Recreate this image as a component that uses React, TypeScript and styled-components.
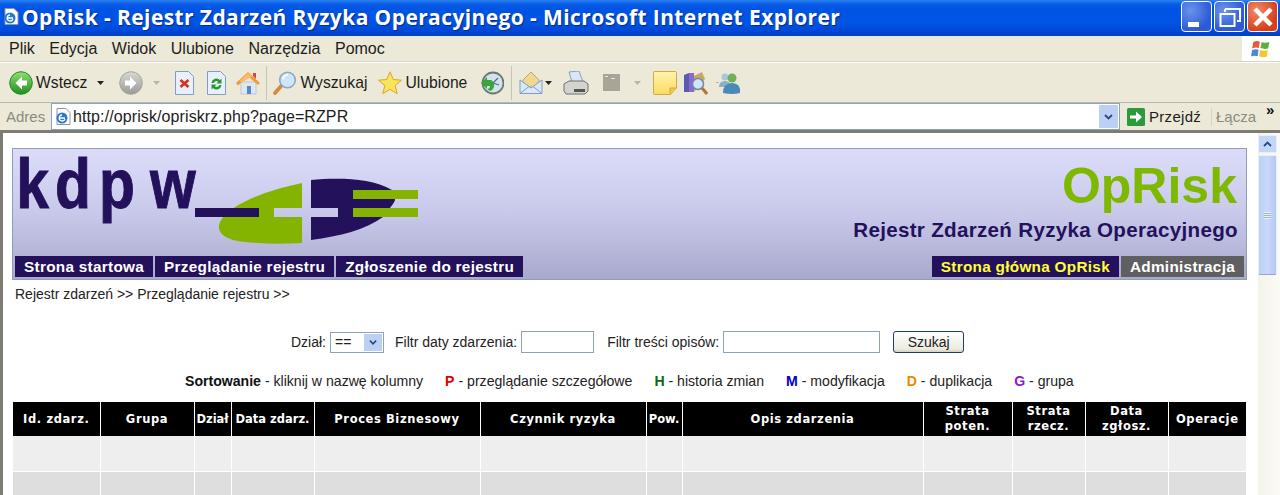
import styled, {createGlobalStyle} from "styled-components";

const GlobalStyle = createGlobalStyle`
    html, body {
        margin: 0;
        padding: 0;
        background: #fff;
    }
    * {
        box-sizing: border-box;
    }
`;

const sans = `"Liberation Sans", Arial, sans-serif`;

const columns = [
    {width: 87, label: ["Id. zdarz."]},
    {width: 94, label: ["Grupa"]},
    {width: 37, label: ["Dział"], tight: true},
    {width: 83, label: ["Data zdarz."], tight: true},
    {width: 166, label: ["Proces Biznesowy"]},
    {width: 166, label: ["Czynnik ryzyka"]},
    {width: 36, label: ["Pow."], tight: true},
    {width: 241, label: ["Opis zdarzenia"]},
    {width: 89, label: ["Strata", "poten."]},
    {width: 73, label: ["Strata", "rzecz."]},
    {width: 83, label: ["Data", "zgłosz."]},
    {width: 78, label: ["Operacje"]},
];

const legend = [
    {key: "P", color: "#e00000", text: "przeglądanie szczegółowe"},
    {key: "H", color: "#0a6a0a", text: "historia zmian"},
    {key: "M", color: "#0000c8", text: "modyfikacja"},
    {key: "D", color: "#ee8800", text: "duplikacja"},
    {key: "G", color: "#8a1cc8", text: "grupa"},
];

const Caret = () => (
    <svg width="7" height="4" viewBox="0 0 7 4"><path d="M0 0h7L3.500 4z" fill="#222"/></svg>
);

const BackIcon = ({off}: {off?: boolean}) => (
    <svg width="24" height="24" viewBox="0 0 24 24" style={off ? {transform: "scaleX(-1)"} : undefined}>
        <defs>
            <linearGradient id={off ? "navOff" : "navOn"} x1="0" y1="0" x2="0" y2="1">
                <stop offset="0" stopColor={off ? "#d8d8d4" : "#8fe070"}/>
                <stop offset="1" stopColor={off ? "#9a9a96" : "#1f8f1f"}/>
            </linearGradient>
        </defs>
        <circle cx="12" cy="12" r="11.300" fill={`url(#${off ? "navOff" : "navOn"})`} stroke={off ? "#a5a5a0" : "#2b8a2b"}/>
        <path d="M13 5.500 6.500 12l6.500 6.500v-4h5v-5h-5z" fill="#fff"/>
    </svg>
);

const StopIcon = () => (
    <svg width="19" height="24" viewBox="0 0 19 24">
        <path d="M.5.5h13l5 5v18H.5z" fill="#e8f0fb" stroke="#7f9dc8"/>
        <path d="M5.500 9l8 7M13.500 9l-8 7" stroke="#d8321a" strokeWidth="2.800"/>
    </svg>
);

const RefreshIcon = () => (
    <svg width="19" height="24" viewBox="0 0 19 24">
        <path d="M.5.5h13l5 5v18H.5z" fill="#e8f0fb" stroke="#7f9dc8"/>
        <path d="M4.500 12a5 5 0 0 1 8.500-3l1.500-1.500v5h-5l1.700-1.700a2.800 2.800 0 0 0-4.500 1.200z" fill="#2a9a30"/>
        <path d="M14.500 14a5 5 0 0 1-8.500 3l-1.500 1.500v-5h5l-1.700 1.700a2.800 2.800 0 0 0 4.500-1.200z" fill="#2a9a30"/>
    </svg>
);

const HomeIcon = () => (
    <svg width="24" height="24" viewBox="0 0 24 24">
        <path d="M5 11h15v12H5z" fill="#dfe7f2" stroke="#a8b4c4" strokeWidth=".6"/>
        <path d="M11 15h4v8h-4z" fill="#5c86c0"/>
        <path d="M0 12 12 1l12 11-2 2-10-8.500L2 14.500z" fill="#f09a3c"/>
        <path d="M4 9.500 12 2l4 3.500L5 12z" fill="#f6bd6a"/>
        <path d="M17 2h3v6l-3-3z" fill="#c8503a"/>
    </svg>
);

const SearchIcon = () => (
    <svg width="24" height="24" viewBox="0 0 24 24">
        <path d="M2 22l7-8" stroke="#d68a3c" strokeWidth="3.800" strokeLinecap="round"/>
        <circle cx="14.500" cy="9" r="7.800" fill="#cfe6fa" stroke="#8ca6c4" strokeWidth="1.600"/>
        <path d="M10 8a5 5 0 0 1 5-4" stroke="#fff" strokeWidth="1.600" fill="none"/>
    </svg>
);

const StarIcon = () => (
    <svg width="24" height="24" viewBox="0 0 24 24">
        <path d="M12 .8l3.300 7.700 8.200.7-6.300 5.400 2 8.100L12 18.400l-7.200 4.300 2-8.100L.5 9.200l8.200-.7z" fill="#fbe35c" stroke="#d8a92c"/>
    </svg>
);

const HistoryIcon = () => (
    <svg width="24" height="24" viewBox="0 0 24 24">
        <circle cx="13" cy="12" r="10.500" fill="#d5e2ee" stroke="#6a7a70" strokeWidth="1.800"/>
        <path d="M13 12l5-5M13 12l6 2" stroke="#4a6a9a" strokeWidth="1.200"/>
        <path d="M1 12l6-6v3h4a6 6 0 0 1-1 11l-3-2c2 0 3-1 3-3H7v3z" fill="#3aa63a"/>
    </svg>
);

const MailIcon = () => (
    <svg width="24" height="24" viewBox="0 0 24 24">
        <path d="M4 9 12 1l8 8v7H4z" fill="#f0d890" stroke="#b8a878"/>
        <path d="M1 9l11 8 11-8v13.500H1z" fill="#d8e8fa" stroke="#7f9dc8"/>
        <path d="M1 22.500l9-7M23 22.500l-9-7" stroke="#7f9dc8" fill="none"/>
    </svg>
);

const PrintIcon = () => (
    <svg width="26" height="24" viewBox="0 0 26 24">
        <path d="M6 1l10-1 4 11H9z" fill="#d8e6f6" stroke="#8aa0bc"/>
        <path d="M1 13l5-3h15l4 3v7l-3 3H3l-2-3z" fill="#d4d4cf" stroke="#70706c"/>
        <path d="M11 18h11v3H11z" fill="#55554f"/>
    </svg>
);

const EditIcon = () => (
    <svg width="17" height="17" viewBox="0 0 17 17">
        <path d="M0 0h17v17H0z" fill="#a8a498"/>
        <path d="M2 2h3v1H2zM8 4h4v1H8z" fill="#e8e6de"/>
    </svg>
);

const NoteIcon = () => (
    <svg width="24" height="24" viewBox="0 0 24 24">
        <defs>
            <linearGradient id="noteFill" x1="0" y1="0" x2="0" y2="1">
                <stop offset="0" stopColor="#fff3ad"/>
                <stop offset="1" stopColor="#fadb62"/>
            </linearGradient>
        </defs>
        <path d="M.5 1.500q0-1 1-1h21q1 0 1 1V17l-6 6.500H1.500q-1 0-1-1z" fill="url(#noteFill)" stroke="#d8a838"/>
        <path d="M23 17h-6v6" fill="#f3c84a" stroke="#d8a838"/>
    </svg>
);

const ResearchIcon = () => (
    <svg width="24" height="24" viewBox="0 0 24 24">
        <path d="M0 4l5-2v19H0z" fill="#5a5ab0"/>
        <path d="M5 2h5v19H5z" fill="#8a6ac8"/>
        <path d="M10 5l8-4 3 7-11 13z" fill="#c8a860"/>
        <circle cx="14" cy="13" r="5.500" fill="#cfe6fa" stroke="#6a8ab0" strokeWidth="1.500"/>
        <path d="M18 17l5 6" stroke="#b8742c" strokeWidth="3"/>
    </svg>
);

const MessengerIcon = () => (
    <svg width="25" height="24" viewBox="0 0 25 24">
        <circle cx="9" cy="6" r="3.500" fill="#a8c8d8"/>
        <path d="M3 16q0-6 6-6t5 6z" fill="#8ab0c4"/>
        <circle cx="16" cy="7" r="4.500" fill="#6fb05a"/>
        <path d="M7 22q0-10 9-10t8 10q-8 2-17 0z" fill="#4a8ab8"/>
        <path d="M0 11h3v1H0z" fill="#a8b8c8"/>
    </svg>
);

const GoIcon = () => (
    <svg width="18" height="18" viewBox="0 0 18 18">
        <rect width="18" height="18" rx="1.500" fill="#2a9a3a"/>
        <path d="M3 7.500h6V3.500L15 9l-6 5.500v-4H3z" fill="#fff"/>
    </svg>
);

const PageIcon = () => (
    <svg width="16" height="17" viewBox="0 0 16 17">
        <path d="M2 .5h9l4 4v12H2z" fill="#fff" stroke="#8a96a8"/>
        <circle cx="7" cy="10" r="5.500" fill="#2a78c8"/>
        <path d="M4 10h6M7 7a3 3 0 1 0 3 4" stroke="#fff" strokeWidth="1.300" fill="none"/>
    </svg>
);

const WindowsFlag = () => (
    <svg width="20" height="20" viewBox="0 0 18 18">
        <path d="M2 3q3-2 6-.5L7 8Q4 7 1 8.500z" fill="#e8583a"/>
        <path d="M9.500 2.700q3 1.500 7 0l-1 5.800q-3 1-7-.3z" fill="#5cb040"/>
        <path d="M1 10q3-1.500 5.800-.3L6 15.500q-3-1.200-6 .3z" fill="#4a88d8"/>
        <path d="M8.200 9.800q4 1.300 7 .2l-1 5.800q-3 1.200-7-.2z" fill="#f0c830"/>
    </svg>
);

const ChevronDown = ({size = 9}: {size?: number}) => (
    <svg width={size} height={size} viewBox="0 0 9 9">
        <path d="M1 3l3.500 3.500L8 3" stroke="#2c4a80" strokeWidth="1.800" fill="none"/>
    </svg>
);

const ChevronUp = () => (
    <svg width="9" height="9" viewBox="0 0 9 9">
        <path d="M1 6l3.500-3.500L8 6" stroke="#2c4a80" strokeWidth="1.800" fill="none"/>
    </svg>
);

// viewBox is in page pixels, the logo was measured off the screenshot
const KdpwLogo = () => (
    <svg width="400" height="90" viewBox="19 156 400 90" overflow="visible">
        <text
            transform="scale(0.84 1)"
            x="19.500 65.500 118 178.500"
            y="208"
            fontFamily={`"Liberation Sans", sans-serif`}
            fontWeight="700"
            fontSize="70"
            fill="#24115c"
            stroke="#24115c"
            strokeWidth="1"
        >kdpw</text>
        <path d="M302 183C270 190 240 200 224 216C212 230 222 240 245 242C265 244 285 244 302 243V217H274V208H302Z" fill="#84b400"/>
        <path d="M195 208h64v9h-64z" fill="#24115c"/>
        <path d="M311 180C335 178 370 177 392 190Q398 197 393 204L383 217C365 230 340 236 311 240V217H338V208H311Z" fill="#24115c"/>
        <path d="M353 190h65v9h-65zM353 208h65v9h-65z" fill="#84b400"/>
    </svg>
);

export default function App() {
    return (
        <Screen>
            <GlobalStyle/>
            <TitleBar>
                <TitleIcon><PageIcon/></TitleIcon>
                <TitleText>OpRisk - Rejestr Zdarzeń Ryzyka Operacyjnego - Microsoft Internet Explorer</TitleText>
                <WinButtons>
                    <WinButton $min>
                        <svg width="11" height="5"><rect width="11" height="5" fill="#fff"/></svg>
                    </WinButton>
                    <WinButton>
                        <svg width="22" height="20" viewBox="0 0 22 20">
                            <path d="M6 2h15v12h-3M6 2v3" stroke="#fff" strokeWidth="2" fill="none"/>
                            <rect x="1.500" y="7" width="14" height="12" stroke="#fff" strokeWidth="2" fill="none"/>
                        </svg>
                    </WinButton>
                    <WinButton $close>
                        <svg width="22" height="22" viewBox="0 0 22 22">
                            <path d="M3 3l16 16M19 3L3 19" stroke="#fff" strokeWidth="4.500"/>
                        </svg>
                    </WinButton>
                </WinButtons>
            </TitleBar>

            <MenuBar>
                <MenuItems>
                    <span>Plik</span>
                    <span>Edycja</span>
                    <span>Widok</span>
                    <span>Ulubione</span>
                    <span>Narzędzia</span>
                    <span>Pomoc</span>
                </MenuItems>
                <FlagBox><WindowsFlag/></FlagBox>
            </MenuBar>

            <ToolBar>
                <Tool $left={9}><BackIcon/><ToolLabel>Wstecz</ToolLabel></Tool>
                <Tool $left={10}><Caret/></Tool>
                <Tool $left={15}><BackIcon off/></Tool>
                <Tool $left={10} $faded><Caret/></Tool>
                <Tool $left={15}><StopIcon/></Tool>
                <Tool $left={13}><RefreshIcon/></Tool>
                <Tool $left={10}><HomeIcon/></Tool>
                <ToolSep $left={6}/>
                <Tool $left={6}><SearchIcon/><ToolLabel>Wyszukaj</ToolLabel></Tool>
                <Tool $left={11}><StarIcon/><ToolLabel>Ulubione</ToolLabel></Tool>
                <Tool $left={13}><HistoryIcon/></Tool>
                <ToolSep $left={7}/>
                <Tool $left={7}><MailIcon/></Tool>
                <Tool $left={2}><Caret/></Tool>
                <Tool $left={11}><PrintIcon/></Tool>
                <Tool $left={14}><EditIcon/></Tool>
                <Tool $left={14} $faded><Caret/></Tool>
                <Tool $left={12}><NoteIcon/></Tool>
                <Tool $left={7}><ResearchIcon/></Tool>
                <Tool $left={8}><MessengerIcon/></Tool>
            </ToolBar>

            <AddressBar>
                <AddressLabel>Adres</AddressLabel>
                <AddressField>
                    <PageIcon/>
                    <AddressText>http://oprisk/opriskrz.php?page=RZPR</AddressText>
                    <DropButton><ChevronDown/></DropButton>
                </AddressField>
                <GoButton><GoIcon/><span>Przejdź</span></GoButton>
                <LinksLabel>Łącza</LinksLabel>
                <MoreLinks>»</MoreLinks>
            </AddressBar>

            <Viewport>
                <Page>
                    <Banner>
                        <BannerTop>
                            <KdpwLogo/>
                            <Product>
                                <ProductName>OpRisk</ProductName>
                                <ProductTitle>Rejestr Zdarzeń Ryzyka Operacyjnego</ProductTitle>
                            </Product>
                        </BannerTop>
                        <BannerNav>
                            <NavGroup>
                                <NavLink>Strona startowa</NavLink>
                                <NavLink>Przeglądanie rejestru</NavLink>
                                <NavLink>Zgłoszenie do rejestru</NavLink>
                            </NavGroup>
                            <NavGroup>
                                <NavLink $active>Strona główna OpRisk</NavLink>
                                <NavLink $muted>Administracja</NavLink>
                            </NavGroup>
                        </BannerNav>
                    </Banner>

                    <Crumbs>Rejestr zdarzeń &gt;&gt; Przeglądanie rejestru &gt;&gt;</Crumbs>

                    <FilterRow>
                        <FilterLabel>Dział:</FilterLabel>
                        <FakeSelect>
                            <span>==</span>
                            <SelectArrow><ChevronDown size={8}/></SelectArrow>
                        </FakeSelect>
                        <FilterLabel $gap={11}>Filtr daty zdarzenia:</FilterLabel>
                        <TextField $width={73} readOnly/>
                        <FilterLabel $gap={13}>Filtr treści opisów:</FilterLabel>
                        <TextField $width={157} readOnly/>
                        <SearchButton>Szukaj</SearchButton>
                    </FilterRow>

                    <Legend>
                        <span><strong>Sortowanie</strong> - kliknij w nazwę kolumny</span>
                        {legend.map(item => (
                            <span key={item.key}><LegendKey $color={item.color}>{item.key}</LegendKey> - {item.text}</span>
                        ))}
                    </Legend>

                    <Grid>
                        <colgroup>
                            {columns.map((col, index) => <col key={index} style={{width: col.width}}/>)}
                        </colgroup>
                        <thead>
                            <tr>
                                {columns.map((col, index) => (
                                    <HeadCell key={index} $tight={col.tight}>
                                        {col.label.map(line => <div key={line}>{line}</div>)}
                                    </HeadCell>
                                ))}
                            </tr>
                        </thead>
                        <tbody>
                            <tr>{columns.map((_, index) => <BodyCell key={index}/>)}</tr>
                            <tr>{columns.map((_, index) => <BodyCell key={index} $even/>)}</tr>
                        </tbody>
                    </Grid>
                </Page>
                <ScrollBar>
                    <ScrollButton><ChevronUp/></ScrollButton>
                    <ScrollThumb><Grip/></ScrollThumb>
                </ScrollBar>
            </Viewport>
        </Screen>
    );
}

const Screen = styled.div`
    width: 1280px;
    height: 495px;
    overflow: hidden;
    display: flex;
    flex-direction: column;
    background: #ece9d8;
    font-family: ${sans};
`;

const TitleBar = styled.div`
    height: 36px;
    flex: none;
    display: flex;
    align-items: center;
    padding: 0 2px 0 3px;
    background: linear-gradient(to bottom, #2a83f0 0, #0a5ce8 4px, #0054e3 9px, #0055e5 22px, #0048d8 31px, #0040c4 36px);
`;

const TitleIcon = styled.div`
    width: 19px;
    display: flex;
    margin-top: -4px;
`;

const TitleText = styled.div`
    flex: 1;
    color: #fff;
    font-family: "Open Sans", sans-serif;
    font-weight: 700;
    font-size: 21px;
    letter-spacing: 0.4px;
    white-space: nowrap;
    text-shadow: 1px 1px 1px #0a2a80;
    margin-top: -3px;
`;

const WinButtons = styled.div`
    display: flex;
    gap: 2px;
    margin-top: -3px;
`;

const WinButton = styled.div<{$close?: boolean; $min?: boolean}>`
    width: 31px;
    height: 31px;
    border: 1px solid #fff;
    border-radius: 4px;
    display: flex;
    align-items: ${p => p.$min ? "flex-end" : "center"};
    justify-content: center;
    padding: ${p => p.$min ? "0 6px 4px 0" : "0"};
    background: ${p => p.$close
        ? "radial-gradient(circle at 30% 30%, #f08a6a, #d8401c 70%)"
        : "radial-gradient(circle at 30% 30%, #6a94ea, #2c5ad8 70%)"};
`;

const MenuBar = styled.div`
    height: 26px;
    flex: none;
    display: flex;
    justify-content: space-between;
    border-bottom: 1px solid #d8d4c4;
    background: #ece9d8;
`;

const MenuItems = styled.div`
    display: flex;
    align-items: center;
    gap: 14.5px;
    padding-left: 9px;
    font-size: 16px;
    color: #1c1c1c;
`;

const FlagBox = styled.div`
    width: 38px;
    display: flex;
    align-items: center;
    justify-content: center;
    background: #fff;
`;

const ToolBar = styled.div`
    height: 41px;
    flex: none;
    display: flex;
    align-items: center;
    background: #ece9d8;
    border-top: 1px solid #fff;
    border-bottom: 1px solid #b8b8ac;
`;

const Tool = styled.div<{$left: number; $faded?: boolean}>`
    display: flex;
    align-items: center;
    margin-left: ${p => p.$left}px;
    opacity: ${p => p.$faded ? 0.25 : 1};
    flex: none;
`;

const ToolLabel = styled.span`
    margin-left: 3px;
    font-size: 15.7px;
    color: #1c1c1c;
`;

const ToolSep = styled.div<{$left: number}>`
    width: 1px;
    height: 34px;
    margin-left: ${p => p.$left}px;
    background: #c8c4b4;
    flex: none;
`;

const AddressBar = styled.div`
    height: 27px;
    flex: none;
    display: flex;
    align-items: center;
    background: #ece9d8;
`;

const AddressLabel = styled.div`
    width: 51px;
    padding-left: 6px;
    font-size: 15px;
    color: #8a8a80;
`;

const AddressField = styled.div`
    width: 1069px;
    height: 27px;
    display: flex;
    align-items: center;
    padding: 0 1px 0 3px;
    background: #fff;
    border: 1px solid #8ea3b8;
`;

const AddressText = styled.span`
    flex: 1;
    margin-left: 2px;
    font-size: 16px;
    letter-spacing: 0.1px;
    color: #1c1c1c;
`;

const DropButton = styled.div`
    width: 19px;
    height: 23px;
    display: flex;
    align-items: center;
    justify-content: center;
    background: #bcd0f4;
    border-radius: 1px;
`;

const GoButton = styled.div`
    width: 92px;
    display: flex;
    align-items: center;
    gap: 4px;
    padding-left: 7px;
    font-size: 15px;
    letter-spacing: 0.3px;
    color: #1c1c1c;
    border-right: 1px solid #d8d4c4;
`;

const LinksLabel = styled.div`
    margin-left: 4px;
    font-size: 15px;
    color: #8a8a80;
`;

const MoreLinks = styled.div`
    margin: -14px 0 0 10px;
    font-size: 15px;
    font-weight: 700;
    color: #111;
`;

const Viewport = styled.div`
    flex: 1;
    display: flex;
    min-height: 0;
    background: #fff;
    border-top: 3px solid #7c7c74;
    border-left: 3px solid #7c7c74;
`;

const Page = styled.div`
    width: 1255px;
    flex: none;
    padding: 15px 0 0 9px;
    overflow: hidden;
`;

const Banner = styled.div`
    width: 1235px;
    height: 132px;
    display: flex;
    flex-direction: column;
    justify-content: space-between;
    padding: 0 2px 2px 2px;
    background: linear-gradient(to bottom, #dcdcfa 0%, #c8c8ea 50%, #a9a9cd 100%);
    border: 1px solid #8f9fb0;
`;

const BannerTop = styled.div`
    display: flex;
    justify-content: space-between;
    height: 100px;
    padding: 7px 7px 0 4px;
`;

const Product = styled.div`
    display: flex;
    flex-direction: column;
    align-items: flex-end;
`;

const ProductName = styled.div`
    font-size: 50px;
    line-height: 60px;
    font-weight: 700;
    color: #7fb800;
`;

const ProductTitle = styled.div`
    margin: 2px -1px 0 0;
    font-size: 20.6px;
    line-height: 24px;
    font-weight: 700;
    letter-spacing: 0.3px;
    color: #24115c;
`;

const BannerNav = styled.div`
    display: flex;
    justify-content: space-between;
`;

const NavGroup = styled.div`
    display: flex;
    gap: 2px;
`;

const NavLink = styled.div<{$active?: boolean; $muted?: boolean}>`
    height: 21px;
    padding: 0 9px;
    display: flex;
    align-items: center;
    font-size: 15.3px;
    font-weight: 700;
    letter-spacing: 0.3px;
    white-space: nowrap;
    color: ${p => p.$active ? "#ffff33" : "#fff"};
    background: ${p => p.$muted ? "#5f5f5f" : "#24115c"};
`;

const Crumbs = styled.div`
    margin: 6px 0 0 3px;
    font-size: 14px;
    line-height: 16px;
    color: #222;
`;

const FilterRow = styled.div`
    height: 24px;
    margin-top: 28px;
    width: 1235px;
    padding-left: 279px;
    display: flex;
    align-items: center;
    font-size: 14px;
    color: #222;
`;

const FilterLabel = styled.span<{$gap?: number}>`
    margin-left: ${p => p.$gap ?? 0}px;
    margin-right: 4px;
    white-space: nowrap;
`;

const FakeSelect = styled.div`
    width: 54px;
    height: 21px;
    display: flex;
    align-items: center;
    justify-content: space-between;
    padding: 0 1px 0 4px;
    background: #fff;
    border: 1px solid #8ea3b8;
`;

const SelectArrow = styled.div`
    width: 18px;
    height: 17px;
    display: flex;
    align-items: center;
    justify-content: center;
    background: #bcd0f4;
`;

const TextField = styled.input`
    width: ${(p: {$width: number}) => p.$width}px;
    height: 22px;
    padding: 0;
    background: #fff;
    border: 1px solid #8ea3b8;
`;

const SearchButton = styled.div`
    width: 71px;
    height: 22px;
    margin-left: 13px;
    display: flex;
    align-items: center;
    justify-content: center;
    border: 1px solid #1f3f6a;
    border-radius: 3px;
    background: linear-gradient(to bottom, #fff, #ecebe0 85%, #d6d0c0);
`;

const Legend = styled.div`
    width: 1235px;
    margin-top: 19px;
    height: 16px;
    padding-left: 173px;
    display: flex;
    gap: 22px;
    align-items: center;
    font-size: 14.1px;
    color: #222;
    white-space: nowrap;
    strong {
        color: #111;
    }
`;

const LegendKey = styled.b<{$color: string}>`
    color: ${p => p.$color};
`;

const Grid = styled.table`
    margin: 13px 0 0 1px;
    width: 1233px;
    table-layout: fixed;
    border-collapse: collapse;
`;

const HeadCell = styled.th<{$tight?: boolean}>`
    height: 34px;
    padding: 0;
    background: #000;
    color: #fff;
    font-family: "DejaVu Sans", sans-serif;
    font-size: 11.5px;
    line-height: 15px;
    font-weight: 700;
    letter-spacing: ${p => p.$tight ? "0" : "0.6px"};
    white-space: nowrap;
    border-right: 1px solid #fff;
    &:last-child {
        border-right: 0;
    }
`;

const BodyCell = styled.td<{$even?: boolean}>`
    height: 35px;
    padding: 0;
    background: ${p => p.$even ? "#dedede" : "#eeeeee"};
    border-right: 1px solid #fff;
    border-bottom: 1px solid #fff;
    &:last-child {
        border-right: 0;
    }
`;

const ScrollBar = styled.div`
    width: 22px;
    flex: none;
    padding: 2px 2px 0 0;
    background: linear-gradient(to right, #f4f3ea, #fbfbf5);
    display: flex;
    flex-direction: column;
    gap: 2px;
`;

const ScrollButton = styled.div`
    width: 19px;
    height: 18px;
    display: flex;
    align-items: center;
    justify-content: center;
    background: #c4d6f8;
    border: 1px solid #e8eefa;
    border-radius: 2px;
`;

const ScrollThumb = styled.div`
    width: 19px;
    height: 120px;
    display: flex;
    align-items: center;
    justify-content: center;
    background: linear-gradient(to right, #bcd0f6, #c8d8fa 50%, #b4c8f0);
    border: 1px solid #e8eefa;
    border-bottom-color: #8ea8d8;
    border-radius: 2px;
`;

const Grip = styled.div`
    width: 7px;
    height: 7px;
    background: repeating-linear-gradient(to bottom, #e8eefa 0 1px, #9ab4e0 1px 2px);
`;
